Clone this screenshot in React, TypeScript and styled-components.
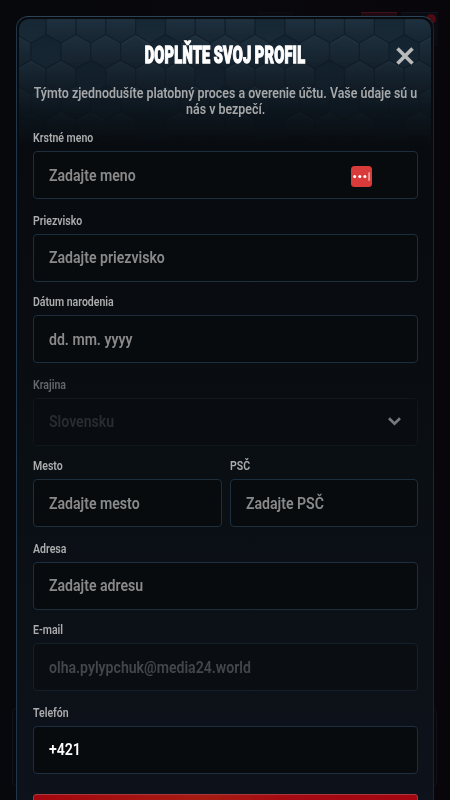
import React from "react";
import styled, { createGlobalStyle } from "styled-components";

const GlobalStyle = createGlobalStyle`
  * { box-sizing: border-box; }
  html, body { margin: 0; height: 100%; background: #07070b; }
  body { overflow: hidden; font-family: "Roboto Condensed", Roboto, sans-serif; }
`;

const Page = styled.div`
  position: relative;
  width: 450px;
  height: 800px;
  padding: 16px 16px 0;
  overflow: hidden;
  background: linear-gradient(90deg, #07080c, #09080c 50%, #08060a);
`;

const BackdropTab = styled.div<{ $x: number; $w: number; $c: string }>`
  position: absolute;
  top: 12px;
  left: ${(p) => p.$x}px;
  width: ${(p) => p.$w}px;
  height: 34px;
  border-top: 1px solid ${(p) => p.$c};
  background: ${(p) => p.$c}66;
`;

const BackdropDot = styled.div`
  position: absolute;
  top: 14px;
  left: 426px;
  width: 10px;
  height: 10px;
  border-radius: 50%;
  background: #4c0b12;
`;

const BackdropCard = styled.div`
  position: absolute;
  top: 708px;
  left: 12px;
  width: 425px;
  height: 78px;
  border: 1px solid #101119;
  border-radius: 4px;
`;

const Modal = styled.section`
  position: relative;
  width: 418px;
  height: 850px;
  padding: 0 15px 0 16px;
  border: 1px solid #1b2530;
  border-top-color: #2c4257;
  border-left-color: #20364a;
  border-radius: 12px;
  background: linear-gradient(180deg, #080a0e 0, #080b0f 180px, #0a0f14 460px, #0e121b 800px);
  overflow: hidden;
`;

const HexLayer = styled.svg`
  position: absolute;
  top: 2px;
  left: 2px;
  width: 412px;
  height: 130px;
  border-radius: 10px 10px 0 0;
`;

const Header = styled.header`
  position: relative;
  height: 66px;
  display: flex;
  justify-content: center;
  padding-top: 24px;
`;

const Squeeze = styled.span<{ $k: number; $origin?: string }>`
  display: inline-block;
  white-space: nowrap;
  transform: scaleX(${(p) => p.$k});
  transform-origin: ${(p) => p.$origin ?? "left"} center;
`;

const Title = styled.h1`
  margin: 0;
  font: 900 23.5px/28px Roboto, sans-serif;
  color: #fff;
  letter-spacing: 0.4px;
  word-spacing: -1px;
  -webkit-text-stroke: 1.3px #fff;
`;

const Close = styled.button`
  position: absolute;
  right: 3px;
  top: 29px;
  width: 20px;
  height: 20px;
  padding: 0;
  border: 0;
  background: none;
  svg { display: block; }
`;

const Intro = styled.p`
  position: relative;
  margin: 0;
  display: flex;
  flex-direction: column;
  align-items: center;
  height: 47px;
  padding-top: 2px;
  font: 600 14px/16px Roboto, sans-serif;
  color: #a6a7a9;
`;

const Label = styled.span<{ $color?: string }>`
  display: block;
  height: 21px;
  font: 600 12px/16px Roboto, sans-serif;
  color: ${(p) => p.$color ?? "#adadae"};
`;

const Box = styled.span<{ $border?: string; $color?: string; $bg?: string }>`
  display: flex;
  align-items: center;
  height: 48px;
  padding: 2px 16px 0 15px;
  border: 1px solid ${(p) => p.$border ?? "#1d2f3e"};
  border-radius: 4px;
  background: ${(p) => p.$bg ?? "#070b0e"};
  color: ${(p) => p.$color ?? "#8a8a8a"};
  font: 600 16px/20px Roboto, sans-serif;
  svg { display: block; margin-left: auto; flex: none; }
`;

const Field = styled.label`
  display: block;
  height: 74px;
`;

const Row = styled.div`
  display: grid;
  grid-template-columns: 189px 188px;
  gap: 8px;
`;

const Form = styled.form`
  position: relative;
  display: grid;
  gap: 8px;

  > ${Field}:nth-child(even) {
    padding-top: 1px;
  }
  > ${Field}:nth-child(even) ${Box} {
    padding-top: 0;
  }
`;

const Manager = styled.span`
  display: flex;
  margin-left: auto;
  margin-right: 29px;
`;

const Submit = styled.button`
  display: block;
  width: 100%;
  height: 48px;
  margin-top: 8px;
  border: 1px solid #a8383d;
  border-radius: 3px;
  background: linear-gradient(90deg, #a3060e, #a51c12 45%, #a50b12 65%, #a30610);
`;

const W = 29.85;
const P = 25.6;
const hexes = Array.from({ length: 6 }, (_, r) =>
  Array.from({ length: 16 }, (_, c) => {
    const x = (r % 2 ? -17.8 : -2.8) + c * W;
    const y = -10 + r * P;
    return { r, c, x, y };
  })
).flat();

const Hexagons = () => (
  <HexLayer viewBox="0 0 412 130">
    <defs>
      <linearGradient id="base" x1="0" y1="0" x2="0" y2="1">
        <stop offset="0" stopColor="#1c2d3b" />
        <stop offset=".35" stopColor="#15222d" />
        <stop offset=".7" stopColor="#0c141b" />
        <stop offset="1" stopColor="#080b0f" />
      </linearGradient>
      <linearGradient id="fade" x1="0" y1="0" x2="0" y2="1">
        <stop offset="0" stopColor="#fff" stopOpacity=".8" />
        <stop offset=".5" stopColor="#fff" stopOpacity=".5" />
        <stop offset="1" stopColor="#fff" stopOpacity="0" />
      </linearGradient>
      <linearGradient id="cell" x1="0" y1="0" x2="0" y2="1">
        <stop offset="0" stopColor="#2c4252" stopOpacity=".4" />
        <stop offset="1" stopColor="#14212d" stopOpacity=".3" />
      </linearGradient>
      <linearGradient id="cellDark" x1="0" y1="0" x2="0" y2="1">
        <stop offset="0" stopColor="#0c1c29" stopOpacity=".6" />
        <stop offset="1" stopColor="#1b2e3c" stopOpacity=".5" />
      </linearGradient>
      <mask id="m"><rect width="412" height="130" fill="url(#fade)" /></mask>
    </defs>
    <rect width="412" height="130" fill="url(#base)" />
    <g mask="url(#m)">
      {hexes.map(({ r, c, x, y }) => {
        const d = `M${x} ${y + 8.5}l${W / 2}-8.5l${W / 2} 8.5v17l${-W / 2} 8.5l${-W / 2}-8.5z`;
        const dark = (r * 5 + c * 3) % 4 === 0;
        return (
          <g key={`${r}-${c}`}>
            <path d={d} fill={dark ? "url(#cellDark)" : "url(#cell)"} stroke="#0c1720" strokeWidth="1.2" strokeOpacity=".55" />
            {!dark && (
              <path
                d={`M${x + 1.2} ${y + 9.5}l${W / 2 - 1.2}-8.2l${W / 2 - 1.2} 8.2`}
                fill="none"
                stroke="#3c566b"
                strokeWidth=".8"
                opacity={(r * 3 + c * 2) % 5 < 2 ? 0.4 : 0.1}
              />
            )}
          </g>
        );
      })}
    </g>
  </HexLayer>
);

type TextFieldProps = {
  label: string;
  text: string;
  border?: string;
  color?: string;
  bg?: string;
  labelColor?: string;
  children?: React.ReactNode;
};

const TextField = ({ label, text, border, color, bg, labelColor, children }: TextFieldProps) => (
  <Field>
    <Label $color={labelColor}><Squeeze $k={0.878}>{label}</Squeeze></Label>
    <Box $border={border} $color={color} $bg={bg}>
      <Squeeze $k={0.881}>{text}</Squeeze>
      {children}
    </Box>
  </Field>
);

export default function App() {
  return (
    <>
      <GlobalStyle />
      <Page>
        <BackdropTab $x={259} $w={34} $c="#0d0e14" />
        <BackdropTab $x={361} $w={36} $c="#42101a" />
        <BackdropTab $x={401} $w={37} $c="#10141f" />
        <BackdropDot />
        <BackdropCard />
        <Modal>
          <Hexagons />
          <Header>
            <Title><Squeeze $k={0.618} $origin="center">DOPLŇTE SVOJ PROFIL</Squeeze></Title>
            <Close type="button" aria-label="Zavrieť">
              <svg width="20" height="20" viewBox="0 0 20 20">
                <path d="M2.5 2.5l15 15M17.5 2.5l-15 15" stroke="#b9babb" strokeWidth="3.6" />
              </svg>
            </Close>
          </Header>
          <Intro>
            <Squeeze $k={0.886} $origin="center">Týmto zjednodušíte platobný proces a overenie účtu. Vaše údaje sú u</Squeeze>
            <Squeeze $k={0.886} $origin="center">nás v bezpečí.</Squeeze>
          </Intro>
          <Form>
            <TextField label="Krstné meno" text="Zadajte meno">
              <Manager>
                <svg width="21" height="21" viewBox="0 0 21 21">
                  <rect width="21" height="21" rx="3.5" fill="#d83b3a" />
                  <circle cx="3.7" cy="10.5" r="1.5" fill="#fff" />
                  <circle cx="8.8" cy="10.5" r="1.5" fill="#fff" />
                  <circle cx="13.9" cy="10.5" r="1.5" fill="#fff" />
                  <rect x="17.3" y="6.4" width="1.6" height="8.4" fill="#f0aaa6" />
                </svg>
              </Manager>
            </TextField>
            <TextField label="Priezvisko" text="Zadajte priezvisko" />
            <TextField label="Dátum narodenia" text="dd. mm. yyyy" />
            <TextField label="Krajina" text="Slovensku" border="#10171d" color="#292c30" bg="#090d11" labelColor="#65676a">
              <svg width="13" height="10" viewBox="0 0 13 10">
                <path d="M1 1.2l5.5 5.5L12 1.2" fill="none" stroke="#77797b" strokeWidth="2.7" />
              </svg>
            </TextField>
            <Row>
              <TextField label="Mesto" text="Zadajte mesto" />
              <TextField label="PSČ" text="Zadajte PSČ" />
            </Row>
            <TextField label="Adresa" text="Zadajte adresu" />
            <TextField label="E-mail" text="olha.pylypchuk@media24.world" border="#14212b" color="#44474a" bg="#0a0e12" />
            <TextField label="Telefón" text="+421" color="#fff" />
            <Submit type="button" aria-label="Uložiť" />
          </Form>
        </Modal>
      </Page>
    </>
  );
}
